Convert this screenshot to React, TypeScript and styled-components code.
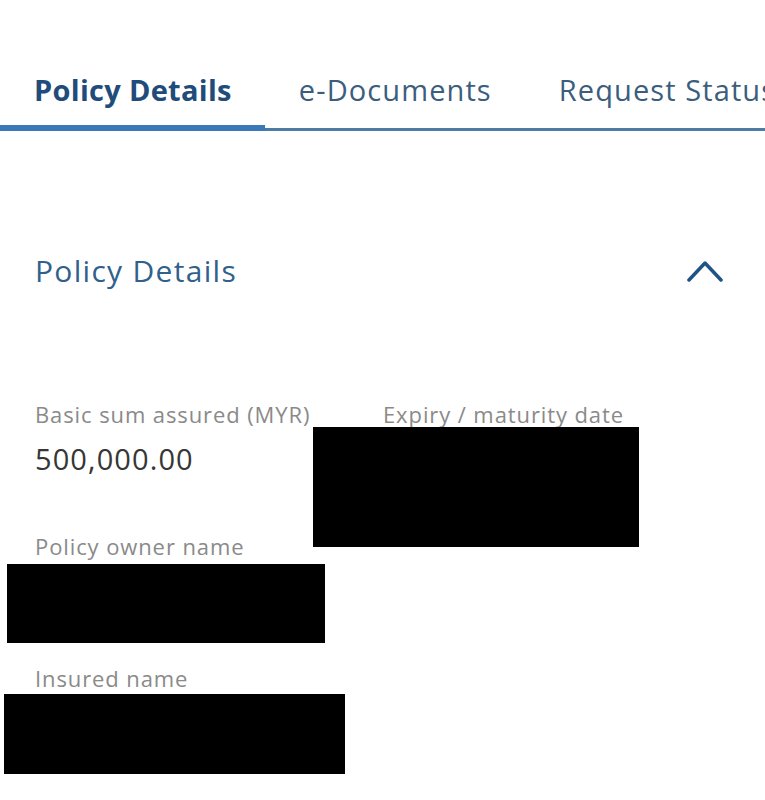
import React from 'react';
import styled, { createGlobalStyle } from 'styled-components';

const colors = {
  activeTab: '#1f4c7a',
  tab: '#3b5d7e',
  title: '#2f618c',
  underline: '#3a78b8',
  baseLine: '#4a7ca6',
  label: '#8a8a8a',
  value: '#363636',
  chevron: '#1f5286',
};

const GlobalStyle = createGlobalStyle`
  body {
    margin: 0;
    background: #ffffff;
    font-family: 'Open Sans', Lato, 'Liberation Sans', sans-serif;
    overflow: hidden;
  }
`;

type FieldProps = {
  label: string;
  value?: string;
  redaction?: { top: number; left: number; width: number; height: number };
};

function Field({ label, value, redaction }: FieldProps) {
  return (
    <FieldWrapper>
      <Label>{label}</Label>
      <Value>{value}</Value>
      {redaction && (
        <Redaction
          $top={redaction.top}
          $left={redaction.left}
          $width={redaction.width}
          $height={redaction.height}
        />
      )}
    </FieldWrapper>
  );
}

export default function App() {
  return (
    <>
      <GlobalStyle />
      <Page>
        <TabBar>
          <Tab $active>Policy Details</Tab>
          <Tab>e-Documents</Tab>
          <Tab>Request Status</Tab>
        </TabBar>
        <Section>
          <SectionHeader>
            <SectionTitle>Policy Details</SectionTitle>
            <Chevron width='36' height='24' viewBox='0 0 36 24'>
              <polyline points='2,21 18,4 34,21' />
            </Chevron>
          </SectionHeader>
          <FieldGrid>
            <Field label='Basic sum assured (MYR)' value='500,000.00' />
            <Field
              label='Expiry / maturity date'
              redaction={{ top: 26, left: -70, width: 326, height: 120 }}
            />
            <Field
              label='Policy owner name'
              redaction={{ top: 31, left: -28, width: 318, height: 79 }}
            />
            <div />
            <Field
              label='Insured name'
              redaction={{ top: 29, left: -31, width: 341, height: 80 }}
            />
          </FieldGrid>
        </Section>
      </Page>
    </>
  );
}

const Page = styled.div`
  width: 765px;
  height: 800px;
  overflow: hidden;
  padding-top: 50px;
  box-sizing: border-box;
`;

const TabBar = styled.div`
  display: flex;
  white-space: nowrap;
  border-bottom: 3px solid ${colors.baseLine};
`;

const Tab = styled.div<{ $active?: boolean }>`
  padding: 20px 33px 18px 34px;
  font-size: 29px;
  line-height: 40px;
  letter-spacing: ${props => (props.$active ? '0.3px' : '1.1px')};
  font-weight: ${props => (props.$active ? 700 : 400)};
  color: ${props => (props.$active ? colors.activeTab : colors.tab)};
  border-bottom: 3px solid ${props => (props.$active ? colors.underline : 'transparent')};
  margin-bottom: -3px;
  box-shadow: ${props => (props.$active ? `0 -3px 0 ${colors.underline} inset` : 'none')};
`;

const Section = styled.div`
  padding: 122px 0 0 35px;
`;

const SectionHeader = styled.div`
  display: flex;
  align-items: center;
  justify-content: space-between;
  padding-right: 42px;
`;

const SectionTitle = styled.h2`
  margin: 0;
  font-size: 30px;
  line-height: 36px;
  font-weight: 400;
  letter-spacing: 1.3px;
  color: ${colors.title};
`;

const Chevron = styled.svg`
  fill: none;
  stroke: ${colors.chevron};
  stroke-width: 3.5;
  stroke-linecap: round;
  stroke-linejoin: round;
`;

const FieldGrid = styled.div`
  display: grid;
  grid-template-columns: 348px 1fr;
  row-gap: 56px;
  margin-top: 112px;
`;

const FieldWrapper = styled.div`
  position: relative;
  display: flex;
  flex-direction: column;
`;

const Label = styled.div`
  font-size: 22px;
  line-height: 26px;
  letter-spacing: 0.9px;
  color: ${colors.label};
  white-space: nowrap;
`;

const Value = styled.div`
  margin-top: 14px;
  min-height: 36px;
  font-size: 29px;
  line-height: 36px;
  letter-spacing: 1.1px;
  color: ${colors.value};
`;

const Redaction = styled.div<{ $top: number; $left: number; $width: number; $height: number }>`
  position: absolute;
  top: ${props => `${props.$top}px`};
  left: ${props => `${props.$left}px`};
  width: ${props => `${props.$width}px`};
  height: ${props => `${props.$height}px`};
  background: #000000;
`;
